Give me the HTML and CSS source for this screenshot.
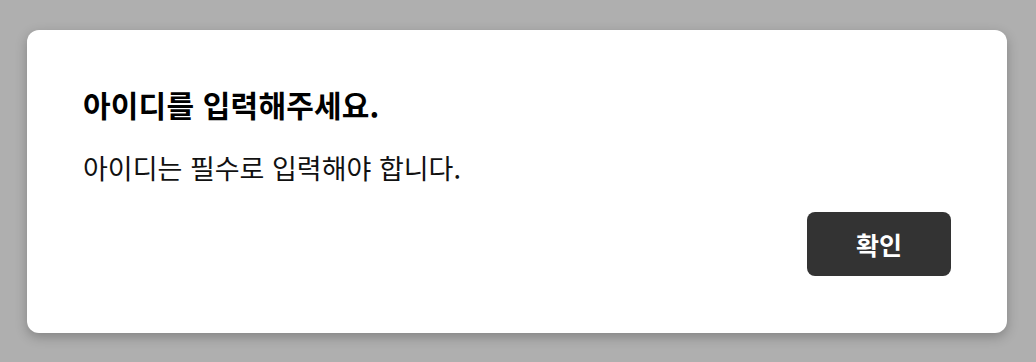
FILE: index.html
```html
<!DOCTYPE html>
<html lang="ko">
<head>
    <meta charset="UTF-8">
    <meta name="viewport" content="width=device-width, initial-scale=1.0">
    <title>알림</title>
    <link rel="stylesheet" href="styles.css">
</head>
<body>
    <div class="overlay">
        <div class="dialog">
            <h1 class="dialog-title">아이디를 입력해주세요.</h1>
            <p class="dialog-text">아이디는 필수로 입력해야 합니다.</p>
            <div class="dialog-actions">
                <button class="confirm-button">확인</button>
            </div>
        </div>
    </div>
</body>
</html>
```

FILE: styles.css
```css
body {
    font-family: 'Noto Sans CJK KR', 'Noto Sans', sans-serif;
    margin: 0;
    background: #afafaf;
}
.overlay {
    height: 100vh;
    display: flex;
    align-items: center;
    justify-content: center;
    padding-right: 2px;
}
.dialog {
    width: 980px;
    box-sizing: border-box;
    padding: 53px 56px 57px;
    background: #fff;
    border-radius: 12px;
    box-shadow: 0 4px 12px rgba(0, 0, 0, 0.25);
}
.dialog-title {
    margin: 0;
    font-size: 30px;
    font-weight: 700;
    line-height: 42px;
    letter-spacing: 0.2px;
    color: #000;
}
.dialog-text {
    margin: 24px 0 0;
    font-size: 27px;
    line-height: 38px;
    color: #111;
}
.dialog-actions {
    display: flex;
    justify-content: flex-end;
    margin-top: 25px;
}
.confirm-button {
    width: 144px;
    height: 64px;
    background: #333;
    color: #fff;
    border: none;
    border-radius: 8px;
    font-family: inherit;
    font-size: 25px;
    font-weight: 700;
    cursor: pointer;
}
```
